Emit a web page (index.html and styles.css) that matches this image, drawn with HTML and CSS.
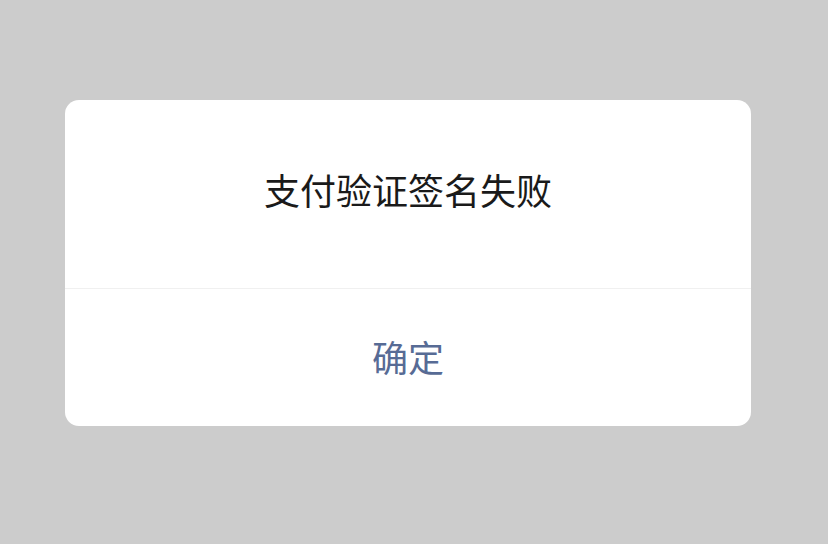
FILE: index.html
```html
<!DOCTYPE html>
<html lang="zh-CN">
<head>
<meta charset="utf-8">
<link rel="stylesheet" href="styles.css">
</head>
<body>
<div class="dialog">
  <div class="dialog-body">支付验证签名失败</div>
  <div class="dialog-footer">确定</div>
</div>
</body>
</html>
```
FILE: styles.css
```css
html, body {
  margin: 0;
  padding: 0;
}
body {
  width: 828px;
  height: 544px;
  background: #cccccc;
  font-family: "Noto Sans CJK SC", "Noto Sans", sans-serif;
  box-sizing: border-box;
  padding: 100px 0 0 65px;
}
.dialog {
  width: 686px;
  height: 326px;
  background: #ffffff;
  border-radius: 14px;
  display: flex;
  flex-direction: column;
  overflow: hidden;
}
.dialog-body {
  height: 189px;
  box-sizing: border-box;
  padding-bottom: 11px;
  display: flex;
  align-items: center;
  justify-content: center;
  font-size: 36px;
  line-height: 1;
  color: #1a1a1a;
  border-bottom: 1px solid #f0f0f0;
}
.dialog-footer {
  flex: 1;
  padding-bottom: 4px;
  display: flex;
  align-items: center;
  justify-content: center;
  font-size: 36px;
  line-height: 1;
  color: #576b95;
}
```
